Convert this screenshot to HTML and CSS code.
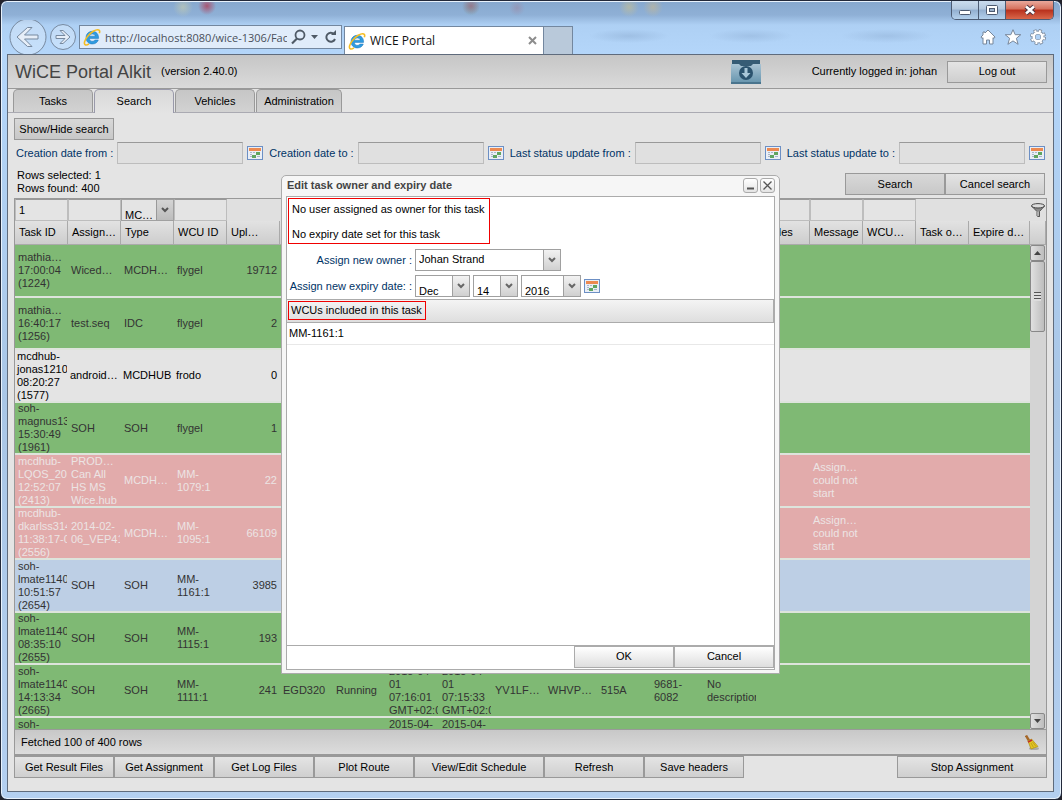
FILE: index.html
```html
<!doctype html>
<html lang="en">
<head>
  <meta charset="utf-8">
  <title>WICE Portal</title>
  <meta name="viewport" content="width=device-width, initial-scale=1">
  <link rel="stylesheet" href="styles.css">
</head>
<body>
  <!-- shared icons -->
  <svg class="symbols" aria-hidden="true">
    <symbol id="icon-calendar" viewBox="0 0 16 14">
      <rect x=".5" y=".5" width="15" height="13" fill="#e9eef6" stroke="#6c8fc4"/>
      <rect x="2" y="2" width="12" height="3" fill="#ec8a51"/>
      <path d="M3 6h2v1H3zM6 6h2v1H6zM9 6h2v1H9zM3 8h2v1H3zM3 10h2v1H3z" fill="#a9b6c8"/>
      <path d="M9 6h4v3H9zM5 9h4v3H5z" fill="#5fa561"/>
      <path d="M10 10h3v1h-3z" fill="#a9b6c8"/>
    </symbol>
    <symbol id="icon-ie" viewBox="0 0 18 18">
      <path d="M15.6 10.4H6.4c.2 1.900 1.400 2.900 3 2.900 1.200 0 2-.5 2.500-1.300h3.400c-.9 2.500-3.100 4-6 4C5.600 16 3 13.300 3 9.700 3 6 5.700 3.300 9.300 3.300c3.900 0 6.500 2.800 6.300 7.100zM6.500 8.200h5.700C12 6.800 10.900 6 9.400 6 7.900 6 6.800 6.800 6.500 8.200z" fill="#2f9be0" stroke="#1b74b8" stroke-width=".5"/>
      <path d="M16.300 5.200c.6-1.600.4-2.900-.6-3.300C13.200.9 7.500 4.200 4.200 8.900 1.600 12.500.6 15.800 2.200 16.700c.9.5 2.300.1 3.800-.9" fill="none" stroke="#f4bd22" stroke-width="1.600"/>
    </symbol>
  </svg>

  <div class="window">
    <div class="caption">
      <div class="caption-buttons">
        <button type="button" class="caption-btn" aria-label="Minimize">
          <svg width="14" height="12"><rect x="1.500" y="6.500" width="11" height="4" rx="1" fill="#fff" stroke="#4d5a70"/></svg>
        </button>
        <button type="button" class="caption-btn" aria-label="Maximize">
          <svg width="14" height="12"><rect x="1.500" y="1.500" width="11" height="9" rx="1" fill="#fff" stroke="#4d5a70"/><rect x="4.500" y="4.500" width="5" height="3" fill="#9db3cd" stroke="#4d5a70"/></svg>
        </button>
        <button type="button" class="caption-btn caption-close" aria-label="Close window">
          <svg width="14" height="12"><path d="M3 2.500l8 7M11 2.500l-8 7" stroke="#4a3440" stroke-width="4.500"/><path d="M3 2.500l8 7M11 2.500l-8 7" stroke="#fff" stroke-width="2.500"/></svg>
        </button>
      </div>
    </div>
    <div class="navbar">
      <button type="button" class="nav-btn" aria-label="Back">
        <svg width="38" height="38" viewBox="0 0 38 38"><circle cx="19" cy="19" r="18" fill="#ffffff40" stroke="#77899f"/><path d="M8 19L18.500 9.500h4.500L15.500 17H29v4H15.500l7.500 7.500h-4.500z" fill="#e6eef8" stroke="#77899f"/></svg>
      </button>
      <button type="button" class="nav-btn" aria-label="Forward">
        <svg width="26" height="26" viewBox="0 0 26 26"><circle cx="13" cy="13" r="12.500" fill="#ffffff40" stroke="#77899f"/><path d="M20 13l-7-6.500h-3l5 5H6v3h9l-5 5h3z" fill="#e6eef8" stroke="#77899f"/></svg>
      </button>
      <div class="address">
        <svg width="18" height="18"><use href="#icon-ie"/></svg>
        <input type="text" aria-label="Address" value="http://localhost:8080/wice-1306/FaceletPortal">
        <svg width="48" height="18" fill="none" stroke="#4f5a66">
          <circle cx="9" cy="7" r="4.500" stroke-width="1.800"/><path d="M6 10.500L1 15.500" stroke-width="2.200"/>
          <path d="M20 7h7l-3.500 4z" fill="#4f5a66" stroke="none"/>
          <path d="M43 6a4.500 4.500 0 1 0 1 5" stroke-width="2"/><path d="M40 7h5V2z" fill="#4f5a66" stroke="none"/>
        </svg>
      </div>
      <div class="browser-tab">
        <svg width="18" height="18"><use href="#icon-ie"/></svg>
        <span>WICE Portal</span>
        <button type="button" aria-label="Close tab"><svg width="9" height="9"><path d="M1 1l7 7M8 1L1 8" stroke="#8d8d8d" stroke-width="2"/></svg></button>
      </div>
      <button type="button" class="new-tab" aria-label="New tab"></button>
      <div class="browser-tools">
        <button type="button" aria-label="Home"><svg width="16" height="16"><path d="M8 1l7 7-1 1.500-1-.8V15H9.500v-4h-3v4H3V8.700l-1 .8L1 8l2-2V3h2v1z" fill="#fff" stroke="#77869a"/></svg></button>
        <button type="button" aria-label="Favorites"><svg width="18" height="16"><path d="M9 .7l2.200 5h5.600l-4.400 3.600 1.700 6L9 11.900l-5.100 3.400 1.700-6L1.200 5.700h5.600z" fill="#fff" stroke="#77869a"/></svg></button>
        <button type="button" aria-label="Tools"><svg width="16" height="16"><circle cx="8" cy="8" r="6.500" fill="none" stroke="#77869a" stroke-width="3" stroke-dasharray="3 2.100"/><circle cx="8" cy="8" r="4.500" fill="none" stroke="#77869a" stroke-width="4"/><circle cx="8" cy="8" r="6.200" fill="none" stroke="#fff" stroke-width="2" stroke-dasharray="2 2.870" stroke-dashoffset="-.4"/><circle cx="8" cy="8" r="4.300" fill="none" stroke="#fff" stroke-width="2.500"/></svg></button>
      </div>
    </div>

    <div class="page">
      <header class="header">
        <h1>WiCE Portal Alkit</h1>
        <span class="version">(version 2.40.0)</span>
        <button type="button" class="download" aria-label="Downloads">
          <svg width="30" height="24" viewBox="0 0 30 24">
            <defs><linearGradient id="folder" x2="0" y2="1"><stop offset="0" stop-color="#a9c4d4"/><stop offset="1" stop-color="#6694ad"/></linearGradient></defs>
            <path d="M1 0h28v8H1z" fill="#365c75"/>
            <path d="M0 4h8l2 2h10l2-2h8v19H0z" fill="url(#folder)"/>
            <path d="M0 22h30v2H0z" fill="#49748d"/>
            <circle cx="15" cy="13" r="7" fill="#2b536e"/>
            <path d="M13.500 8h3v5h3L15 18l-4.500-5h3z" fill="#a9c7d8"/>
          </svg>
        </button>
        <span class="user">Currently logged in: johan</span>
        <button type="button" class="btn">Log out</button>
      </header>

      <nav class="tabs">
        <button type="button" class="tab">Tasks</button>
        <button type="button" class="tab active">Search</button>
        <button type="button" class="tab">Vehicles</button>
        <button type="button" class="tab tab-wide">Administration</button>
      </nav>

      <main class="content">
        <div><button type="button" class="btn btn-raised">Show/Hide search</button></div>

        <form class="search-form" id="searchForm">
          <label for="createdFrom">Creation date from :</label>
          <input type="text" id="createdFrom">
          <button type="button" class="pick" aria-label="Pick date"><svg width="16" height="14"><use href="#icon-calendar"/></svg></button>
          <label for="createdTo">Creation date to :</label>
          <input type="text" id="createdTo">
          <button type="button" class="pick" aria-label="Pick date"><svg width="16" height="14"><use href="#icon-calendar"/></svg></button>
          <label for="updatedFrom">Last status update from :</label>
          <input type="text" id="updatedFrom">
          <button type="button" class="pick" aria-label="Pick date"><svg width="16" height="14"><use href="#icon-calendar"/></svg></button>
          <label for="updatedTo">Last status update to :</label>
          <input type="text" id="updatedTo">
          <button type="button" class="pick" aria-label="Pick date"><svg width="16" height="14"><use href="#icon-calendar"/></svg></button>
        </form>

        <div class="search-info">
          <p>Rows selected: 1<br>Rows found: 400</p>
          <button type="submit" form="searchForm" class="btn btn-raised">Search</button>
          <button type="button" class="btn">Cancel search</button>
        </div>

        <div class="grid">
          <table class="grid-head">
            <colgroup><col span="18" class="col"><col><col class="col-scroll"></colgroup>
            <thead>
              <tr class="filters">
                <td><input type="text" value="1" aria-label="Filter Task ID"></td>
                <td><input type="text" aria-label="Filter Assignment"></td>
                <td><select aria-label="Filter Type"><option>MC…</option></select></td>
                <td><input type="text" aria-label="Filter WCU ID"></td>
                <td></td><td></td><td></td><td></td><td></td><td></td><td></td><td></td><td></td><td></td>
                <td><input type="text" aria-label="Filter Nodes"></td>
                <td><input type="text" aria-label="Filter Message"></td>
                <td><input type="text" aria-label="Filter WCU"></td>
                <td></td><td></td>
                <td>
                  <button type="button" class="funnel" aria-label="Filter">
                    <svg width="14" height="14"><path d="M.5 3L6 8.500V13l2.500.8V8.500L13.500 3z" fill="#8a8a8a" stroke="#555"/><ellipse cx="7" cy="2.800" rx="6.500" ry="2.200" fill="#ddd" stroke="#4a4a4a"/><path d="M7 8.500v4.500" stroke="#ddd"/></svg>
                  </button>
                </td>
              </tr>
              <tr class="titles">
                <th>Task ID</th><th>Assign…</th><th>Type</th><th>WCU ID</th><th>Upl…</th>
                <th></th><th></th><th></th><th></th><th></th><th></th><th></th><th></th><th></th>
                <th>Nodes</th><th>Message</th><th>WCU…</th><th>Task o…</th><th>Expire d…</th><th></th>
              </tr>
            </thead>
          </table>
          <div class="grid-body">
            <table class="rows">
              <colgroup><col span="18" class="col"><col></colgroup>
              <tbody>
                <tr class="green">
                  <td><div>mathia…<br>17:00:04<br>(1224)</div></td><td><div>Wiced…</div></td><td><div>MCDH…</div></td><td><div>flygel</div></td><td class="num"><div>19712</div></td>
                  <td></td><td></td><td></td><td></td><td></td><td></td><td></td><td></td><td></td><td></td><td></td><td></td><td></td><td></td>
                </tr>
                <tr class="green">
                  <td><div>mathia…<br>16:40:17<br>(1256)</div></td><td><div>test.seq</div></td><td><div>IDC</div></td><td><div>flygel</div></td><td class="num"><div>2</div></td>
                  <td></td><td></td><td></td><td></td><td></td><td></td><td></td><td></td><td></td><td></td><td></td><td></td><td></td><td></td>
                </tr>
                <tr class="plain">
                  <td><div>mcdhub-<br>jonas1210<br>08:20:27<br>(1577)</div></td><td><div>android…</div></td><td><div>MCDHUB</div></td><td><div>frodo</div></td><td class="num"><div>0</div></td>
                  <td></td><td></td><td></td><td></td><td></td><td></td><td></td><td></td><td></td><td></td><td></td><td></td><td></td><td></td>
                </tr>
                <tr class="green">
                  <td><div>soh-<br>magnus13<br>15:30:49<br>(1961)</div></td><td><div>SOH</div></td><td><div>SOH</div></td><td><div>flygel</div></td><td class="num"><div>1</div></td>
                  <td></td><td></td><td></td><td></td><td></td><td></td><td></td><td></td><td></td><td></td><td></td><td></td><td></td><td></td>
                </tr>
                <tr class="red">
                  <td><div>mcdhub-<br>LQOS_20<br>12:52:07<br>(2413)</div></td><td><div>PROD…<br>Can All<br>HS MS<br>Wice.hub</div></td><td><div>MCDH…</div></td><td><div>MM-<br>1079:1</div></td><td class="num"><div>22</div></td>
                  <td></td><td></td><td></td><td></td><td></td><td></td><td></td><td></td><td></td><td></td><td><div>Assign…<br>could not<br>start</div></td><td></td><td></td><td></td>
                </tr>
                <tr class="red">
                  <td><div>mcdhub-<br>dkarlss314<br>11:38:17-0<br>(2556)</div></td><td><div>2014-02-<br>06_VEP41</div></td><td><div>MCDH…</div></td><td><div>MM-<br>1095:1</div></td><td class="num"><div>66109</div></td>
                  <td></td><td></td><td></td><td></td><td></td><td></td><td></td><td></td><td></td><td></td><td><div>Assign…<br>could not<br>start</div></td><td></td><td></td><td></td>
                </tr>
                <tr class="blue">
                  <td><div>soh-<br>lmate1140<br>10:51:57<br>(2654)</div></td><td><div>SOH</div></td><td><div>SOH</div></td><td><div>MM-<br>1161:1</div></td><td class="num"><div>3985</div></td>
                  <td></td><td></td><td></td><td></td><td></td><td></td><td></td><td></td><td></td><td></td><td></td><td></td><td></td><td></td>
                </tr>
                <tr class="green">
                  <td><div>soh-<br>lmate1140<br>08:35:10<br>(2655)</div></td><td><div>SOH</div></td><td><div>SOH</div></td><td><div>MM-<br>1115:1</div></td><td class="num"><div>193</div></td>
                  <td></td><td></td><td></td><td></td><td></td><td></td><td></td><td></td><td></td><td></td><td></td><td></td><td></td><td></td>
                </tr>
                <tr class="green">
                  <td><div>soh-<br>lmate1140<br>14:13:34<br>(2665)</div></td><td><div>SOH</div></td><td><div>SOH</div></td><td><div>MM-<br>1111:1</div></td><td class="num"><div>241</div></td>
                  <td><div>EGD320</div></td><td><div>Running</div></td><td><div>2015-04-<br>01<br>07:16:01<br>GMT+02:00</div></td><td><div>2015-04-<br>01<br>07:15:33<br>GMT+02:00</div></td><td><div>YV1LF…</div></td><td><div>WHVP…</div></td><td><div>515A</div></td><td><div>9681-<br>6082</div></td><td><div>No<br>description</div></td>
                  <td></td><td></td><td></td><td></td><td></td>
                </tr>
                <tr class="green partial">
                  <td><div>soh-</div></td><td></td><td></td><td></td><td></td><td></td><td></td><td><div>2015-04-</div></td><td><div>2015-04-</div></td>
                  <td></td><td></td><td></td><td></td><td></td><td></td><td></td><td></td><td></td><td></td>
                </tr>
              </tbody>
            </table>
            <div class="scrollbar">
              <button type="button" aria-label="Scroll up"><svg width="7" height="4"><path d="M0 4l3.500-4L7 4z" fill="#444"/></svg></button>
              <div class="thumb"></div>
              <button type="button" class="scroll-down" aria-label="Scroll down"><svg width="7" height="4"><path d="M0 0h7L3.500 4z" fill="#444"/></svg></button>
            </div>
          </div>
          <div class="status">
            <span>Fetched 100 of 400 rows</span>
            <button type="button" class="broom" aria-label="Clear">
              <svg width="14" height="15"><ellipse cx="9" cy="13.500" rx="5" ry="1.500" fill="#aaa"/><path d="M1 .5l3.500 6" stroke="#a5682a" stroke-width="2.500"/><path d="M3 6l3.500-2 6.500 7.500L6 14z" fill="#e3c522" stroke="#b08f12" stroke-width=".7"/><path d="M3 7.200L7 5" stroke="#c22b2b" stroke-width="1.500"/><path d="M6 8l2.500 4.500M7.500 7l3.500 4.500" stroke="#b8981a" stroke-width=".8"/></svg>
            </button>
          </div>
        </div>

        <div class="actions">
          <button type="button" class="btn">Get Result Files</button>
          <button type="button" class="btn">Get Assignment</button>
          <button type="button" class="btn">Get Log Files</button>
          <button type="button" class="btn">Plot Route</button>
          <button type="button" class="btn btn-130">View/Edit Schedule</button>
          <button type="button" class="btn">Refresh</button>
          <button type="button" class="btn">Save headers</button>
          <button type="button" class="btn btn-150">Stop Assignment</button>
        </div>
      </main>

      <div class="overlay">
        <div class="dialog" role="dialog" aria-labelledby="dialogTitle">
          <div class="dialog-title">
            <h2 id="dialogTitle">Edit task owner and expiry date</h2>
            <button type="button" aria-label="Minimize dialog"><svg width="13" height="13"><path d="M3 9.500h7" stroke="#555" stroke-width="2"/></svg></button>
            <button type="button" aria-label="Close dialog"><svg width="13" height="13"><path d="M2.500 2.500l8 8M10.500 2.500l-8 8" stroke="#555" stroke-width="1.300"/></svg></button>
          </div>
          <div class="dialog-body">
            <div class="notice">
              <p>No user assigned as owner for this task</p>
              <p>No expiry date set for this task</p>
            </div>
            <div class="field">
              <label for="owner">Assign new owner :</label>
              <select id="owner" class="owner"><option>Johan Strand</option></select>
            </div>
            <div class="field field-date">
              <label for="month">Assign new expiry date: :</label>
              <select id="month" class="month"><option>Dec</option></select>
              <select class="day" aria-label="Day"><option>14</option></select>
              <select class="year" aria-label="Year"><option>2016</option></select>
              <button type="button" class="pick" aria-label="Pick expiry date"><svg width="16" height="14"><use href="#icon-calendar"/></svg></button>
            </div>
            <table class="wcus">
              <thead><tr><th><span>WCUs included in this task</span></th></tr></thead>
              <tbody><tr><td>MM-1161:1</td></tr></tbody>
            </table>
            <div class="dialog-buttons">
              <button type="button" class="btn btn-light">OK</button>
              <button type="button" class="btn btn-light">Cancel</button>
            </div>
          </div>
        </div>
      </div>
    </div>
  </div>
</body>
</html>
```
FILE: styles.css
```css
* {
  box-sizing: border-box;
}
body {
  margin: 0;
  height: 100vh;
  background: #23232b;
  font-family: "Liberation Sans", Arial, sans-serif;
  font-size: 11px;
  line-height: 13px;
  color: #000;
}
button, input, select {
  font: inherit;
  color: inherit;
  margin: 0;
  padding: 0;
  border: 0;
  border-radius: 0;
  background: none;
}
h1, h2, p {
  margin: 0;
}
svg {
  display: block;
  flex: none;
}
.symbols {
  position: absolute;
  width: 0;
  height: 0;
}

/* window frame */
.window {
  display: flex;
  flex-direction: column;
  height: 100vh;
  border: 1px solid #22293a;
  border-radius: 7px;
  padding: 0 7px 7px 6px;
  box-shadow: inset 0 0 0 1px #e8f2fc;
  background:
    radial-gradient(circle at 206px 5px, #b0405acc 0, transparent 9px),
    radial-gradient(circle at 182px 6px, #c9cfae99 0, transparent 10px),
    radial-gradient(circle at 470px 5px, #a06078aa 0, transparent 9px),
    radial-gradient(circle at 516px 7px, #b0607044 0, transparent 8px),
    radial-gradient(circle at 470px 6px, #6fae9a88 0, transparent 9px),
    radial-gradient(circle at 628px 6px, #c8c09099 0, transparent 10px),
    radial-gradient(circle at 652px 6px, #c8b89099 0, transparent 10px),
    radial-gradient(ellipse 40px 7px at 628px 35px, #8fafd488 0, transparent 100%),
    radial-gradient(ellipse 42px 7px at 750px 35px, #93b3d888 0, transparent 100%),
    radial-gradient(ellipse 46px 7px at 886px 35px, #93b3d888 0, transparent 100%),
    linear-gradient(#86a8ce 0, #8fb0d6 14px, #aed0f4 24px, #b4d6fa 54px, #a9c6e6 50%, #b3cff0 100%);
}
.caption {
  display: flex;
  justify-content: flex-end;
  height: 19px;
}
.caption-buttons {
  display: flex;
  border: 1px solid #4c5b73;
  border-top: 0;
  border-radius: 0 0 5px 5px;
  overflow: hidden;
}
.caption-btn {
  display: flex;
  align-items: center;
  justify-content: center;
  width: 27px;
  border-right: 1px solid #4c5b73;
  background: linear-gradient(#cbdcee 0, #b3c8df 45%, #93afd0 50%, #b3d0ec 100%);
}
.caption-close {
  width: 47px;
  border-right: 0;
  background: linear-gradient(#e9a99c 0, #d5705c 45%, #b8301c 50%, #d9674a 100%);
}
.navbar {
  display: flex;
  align-items: center;
  height: 34px;
  padding: 0 8px 0 2px;
  overflow: hidden;
  font-family: "Open Sans", "Noto Sans", sans-serif;
  font-size: 12px;
  color: #111;
}
.nav-btn {
  margin-right: 3px;
}
.address {
  display: flex;
  align-items: center;
  width: 263px;
  height: 24px;
  padding: 0 2px 0 3px;
  border: 1px solid #73879f;
  background: #e0ecfa;
}
.address input {
  flex: 1;
  min-width: 0;
  margin: 0 4px;
  font-size: 11px;
  color: #4a505a;
}
.browser-tab {
  display: flex;
  align-items: center;
  gap: 4px;
  align-self: flex-end;
  width: 200px;
  height: 28px;
  margin-left: 2px;
  padding: 0 6px 0 3px;
  border: 1px solid #73879f;
  border-bottom: 0;
  background: #fff;
}
.browser-tab button {
  margin-left: auto;
}
.new-tab {
  align-self: flex-end;
  width: 29px;
  height: 28px;
  border: 1px solid #73879f;
  border-width: 1px 1px 0 0;
  background: #b9c9da;
}
.browser-tools {
  display: flex;
  align-items: center;
  gap: 8px;
  margin-left: auto;
}

/* portal page */
.page {
  position: relative;
  display: flex;
  flex: 1;
  flex-direction: column;
  min-height: 0;
  border: 1px solid #5f6b7c;
  background: #e4e4e4;
}
.header {
  display: flex;
  align-items: center;
  height: 34px;
  padding: 0 6px 0 7px;
  border-bottom: 1px solid #999;
  background: linear-gradient(#c6c6c6, #dadada);
}
.header h1 {
  font-size: 18px;
  line-height: 20px;
  font-weight: 400;
  color: #444;
}
.version {
  margin-left: 10px;
}
.download {
  margin-left: auto;
}
.user {
  margin: 0 10px 0 51px;
}
.btn {
  width: 100px;
  height: 22px;
  border: 1px solid #999;
  background: linear-gradient(#e4e4e4, #cfcfcf);
  white-space: nowrap;
}
.btn-raised {
  background: linear-gradient(#d8d8d8, #c8c8c8);
}
.btn-130 {
  width: 130px;
}
.btn-150 {
  width: 150px;
  margin-left: auto;
}
.tabs {
  display: flex;
  gap: 1px;
  height: 24px;
  padding: 0 5px;
  border-bottom: 1px solid #aaaab2;
}
.tab {
  width: 80px;
  height: 23px;
  border: 1px solid #999;
  border-bottom: 0;
  border-radius: 5px 5px 0 0;
  background: linear-gradient(#c6c6c6, #d2d2d2);
}
.tab-wide {
  width: 86px;
}
.tab.active {
  height: 24px;
  border-color: #99a;
  background: linear-gradient(#d8d8d8, #e4e4e4);
}
.content {
  display: flex;
  flex: 1;
  flex-direction: column;
  min-height: 0;
  padding: 5px 6px 13px;
}
.search-form {
  display: flex;
  align-items: center;
  margin-top: 2px;
  padding: 0 2px;
  gap: 4px;
  color: #036;
}
.search-form label {
  white-space: nowrap;
}
.search-form input {
  flex: 1;
  min-width: 0;
  height: 22px;
  padding: 0 3px;
  border: 1px solid #bdbdbd;
  border-top-color: #999;
  background: #e0e0e0;
}
.search-form .pick:not(:last-child) {
  margin-right: 2px;
}
.search-info {
  display: flex;
  align-items: flex-end;
  height: 31px;
  padding-right: 2px;
}
.search-info p {
  margin-right: auto;
  padding-left: 3px;
}

/* result grid */
.grid {
  display: flex;
  flex: 1;
  flex-direction: column;
  min-height: 0;
  margin-top: 3px;
  border: 1px solid #999;
}
table {
  border-collapse: separate;
  border-spacing: 0;
}
.grid-head, .rows {
  width: 100%;
  table-layout: fixed;
}
.col {
  width: 53px;
}
.col-scroll {
  width: 16px;
}
.grid-head td, .grid-head th, .rows td {
  padding: 0;
}
.filters td {
  height: 22px;
  background: #e0e0e0;
}
.filters input {
  display: block;
  width: 100%;
  height: 22px;
  padding: 0 3px;
  border: 1px solid #bdbdbd;
  border-top-color: #999;
  background: #e4e4e4;
}
select {
  display: block;
  appearance: none;
  padding: 0 18px 0 3px;
  border: 1px solid #a0a0a0;
  background:
    url("data:image/svg+xml,%3Csvg xmlns='http://www.w3.org/2000/svg' width='8' height='6'%3E%3Cpath d='M1 1l3 3 3-3' fill='none' stroke='%23666' stroke-width='2'/%3E%3C/svg%3E") no-repeat right 4px center,
    linear-gradient(#a0a0a0, #a0a0a0) no-repeat right 16px top / 1px 100%,
    linear-gradient(#f2f2f2, #d0d0d0) no-repeat right top / 16px 100%,
    #fff;
}
.filters select {
  width: 100%;
  height: 22px;
  padding-top: 9px;
  background:
    url("data:image/svg+xml,%3Csvg xmlns='http://www.w3.org/2000/svg' width='8' height='6'%3E%3Cpath d='M1 1l3 3 3-3' fill='none' stroke='%23555' stroke-width='2'/%3E%3C/svg%3E") no-repeat right 4px center,
    linear-gradient(#999, #999) no-repeat right 16px top / 1px 100%,
    linear-gradient(#d4d4d4, #bcbcbc) no-repeat right top / 16px 100%,
    #e4e4e4;
}
.funnel {
  display: block;
  margin: auto;
}
.titles th {
  height: 24px;
  padding-left: 4px;
  border-right: 1px solid #aaa;
  border-bottom: 1px solid #aaa;
  background: linear-gradient(#e2e2e2, #cdcdcd);
  font-weight: 400;
  text-align: left;
  white-space: nowrap;
  overflow: hidden;
}
.grid-body {
  display: flex;
  flex: 1 1 0;
  min-height: 0;
  overflow: hidden;
}
.rows {
  flex: 1;
  align-self: flex-start;
  color: #333;
}
.rows td {
  height: 53px;
  border-bottom: 2px solid #dde4dc;
}
.rows tr:nth-child(even) td {
  height: 52px;
}
.rows div {
  display: flex;
  flex-direction: column;
  justify-content: center;
  max-height: 50px;
  margin: 0 1px 0 0;
  padding-left: 3px;
  overflow: hidden;
  white-space: nowrap;
}
.rows .num div {
  padding-right: 2px;
  text-align: right;
}
.rows .partial td {
  vertical-align: top;
}
.green {
  background: #7fb974;
}
.red {
  background: #e2abab;
  color: #ece4e4;
}
.blue {
  background: #bdcfe5;
}
.plain {
  color: #000;
}
.rows .plain div {
  padding-left: 2px;
}
.scrollbar {
  display: flex;
  flex: none;
  flex-direction: column;
  width: 16px;
  background: #d4d4d4;
}
.scrollbar button, .thumb {
  display: flex;
  align-items: center;
  justify-content: center;
  width: 15px;
  height: 16px;
  border: 1px solid #888;
  border-radius: 2px;
  background: linear-gradient(90deg, #e0e0e0, #bdbdbd);
}
.thumb {
  height: 71px;
}
.thumb::before {
  content: "";
  width: 7px;
  height: 9px;
  background: repeating-linear-gradient(#555 0 1px, #ddd 1px 3px);
}
.scrollbar .scroll-down {
  margin-top: auto;
}
.status {
  display: flex;
  align-items: center;
  justify-content: space-between;
  height: 26px;
  padding: 0 7px 0 6px;
  border-top: 1px solid #999;
  border-bottom: 1px solid #999;
  background: linear-gradient(#c8c8c8, #dcdcdc);
}
.actions {
  display: flex;
}

/* edit dialog */
.overlay {
  position: absolute;
  inset: 0;
  display: flex;
  align-items: center;
  justify-content: center;
  padding-top: 2px;
}
.dialog {
  display: flex;
  flex-direction: column;
  width: 499px;
  height: 499px;
  padding: 0 4px 3px;
  border: 1px solid #ababab;
  border-radius: 5px 5px 0 0;
  background: #f6f6f6;
}
.dialog-title {
  display: flex;
  align-items: center;
  gap: 2px;
  height: 20px;
  padding: 0 0 1px 1px;
}
.dialog-title h2 {
  flex: 1;
  font-size: 11px;
  line-height: 13px;
  color: #444;
}
.dialog-title button {
  border: 1px solid #aaa;
  border-radius: 3px;
  background: linear-gradient(#fff, #e4e4e4);
}
.dialog-body {
  display: flex;
  flex: 1;
  flex-direction: column;
  border: 1px solid #ababab;
  background: #fff;
}
.notice {
  align-self: flex-start;
  width: 202px;
  height: 46px;
  margin: 1px;
  padding: 4px 3px;
  border: 1px solid #f00000;
}
.notice p + p {
  margin-top: 12px;
}
.field {
  display: flex;
  gap: 3px;
  margin-top: 4px;
}
.field label {
  width: 125px;
  padding-top: 5px;
  color: #036;
  text-align: right;
  white-space: nowrap;
}
.field select {
  height: 22px;
}
.owner {
  width: 146px;
}
.field-date select {
  padding-top: 9px;
}
.month {
  width: 55px;
}
.day {
  width: 45px;
}
.year {
  width: 60px;
}
.wcus {
  width: 100%;
  margin-top: 2px;
}
.wcus th {
  height: 24px;
  padding: 0 1px;
  border: 1px solid #ababab;
  border-left: 0;
  background: linear-gradient(#f4f4f4, #dedede);
  font-weight: 400;
  text-align: left;
}
.wcus th span {
  display: block;
  width: 138px;
  padding: 2px;
  border: 1px solid #f00000;
  white-space: nowrap;
}
.wcus td {
  height: 22px;
  padding: 0 2px;
  border-bottom: 1px solid #e8e8e8;
}
.dialog-buttons {
  display: flex;
  justify-content: flex-end;
  height: 24px;
  margin-top: auto;
  border-top: 1px solid #ababab;
}
.btn-light {
  border-color: #ababab;
  background: linear-gradient(#fff, #dedede);
}
```
